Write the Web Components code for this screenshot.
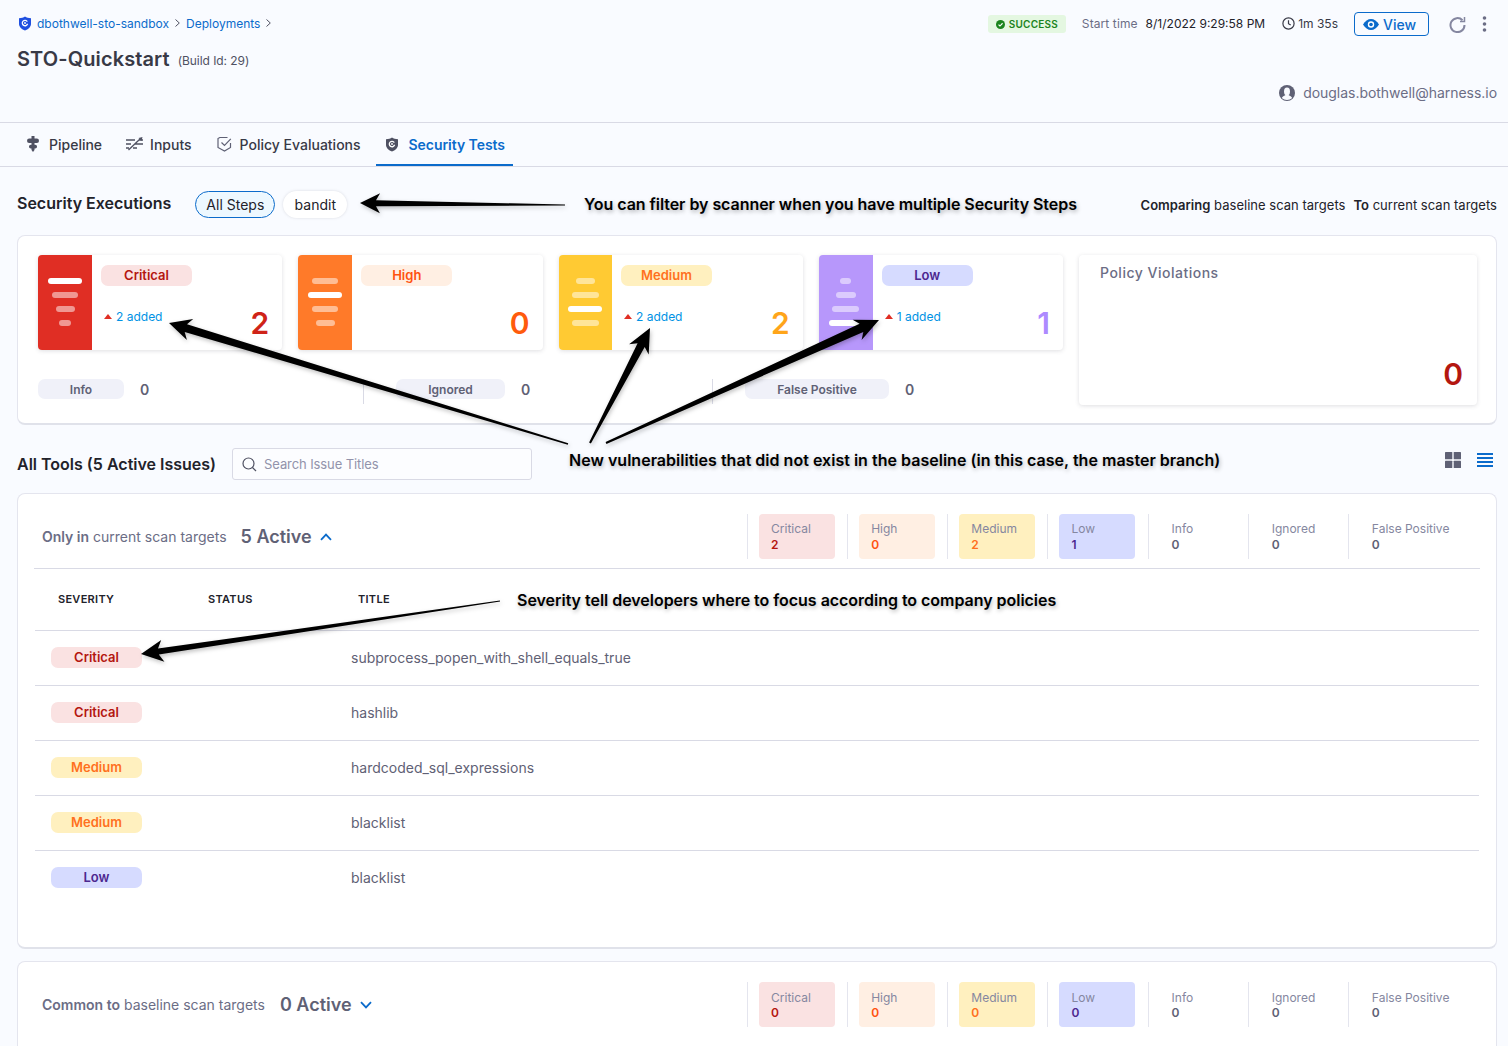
<!DOCTYPE html>
<html><head><meta charset="utf-8"><title>STO-Quickstart</title>
<style>
html,body{margin:0;padding:0;background:#f9fbff;}
body{font-family:Inter,"Liberation Sans",sans-serif;color:#22222a;width:1508px;height:1046px;overflow:hidden;position:relative;}
</style></head><body>
<run-page></run-page>
<script>
const shield=(fill)=>`<svg width="14" height="15" viewBox="0 0 14 15"><path d="M7 .5C8.500 1.500 10.500 2.200 13 2.300V8c0 3-2.800 5.300-6 6.500C3.800 13.300 1 11 1 8V2.300C3.500 2.200 5.500 1.500 7 .5Z" fill="${fill}"/><path d="M9.300 5.600A2.700 2.700 0 1 0 9.600 7.800" fill="none" stroke="#fff" stroke-width="1.300"/><circle cx="7" cy="7" r=".9" fill="#fff"/></svg>`;
const ICON={
logo:shield('#1f4fe0'),
pipeline:'<svg width="12" height="16" viewBox="0 0 12 16" fill="#4f5162"><rect x="4.500" width="3" height="4"/><rect y="2.500" width="12" height="4.500" rx="2.200"/><rect x="4.500" y="6" width="3" height="4"/><rect x="2" y="8.800" width="8" height="3.700" rx="1.800"/><path d="M4.500 12h3v2L6 16 4.500 14Z"/></svg>',
inputs:'<svg width="17" height="14" viewBox="0 0 17 14" fill="none" stroke="#4f5162" stroke-width="1.300"><path d="M0 3h9M13 3h4M0 7h5M9 7h8M0 11h3M7 11h4M2.500 13 14 2"/><path d="M12.500 1 16.500 0 15.500 4Z" fill="#4f5162" stroke="none"/></svg>',
policy:'<svg width="15" height="16" viewBox="0 0 15 16" fill="none" stroke="#5f6175" stroke-width="1.200"><path d="M10.500 1.500H2.800L1 2.500V11.500L7.500 15l6-3.500V7"/><path d="M4.500 6.500l3 3L13.800 2.800"/></svg>',
sec:shield('#4f5162'),
ok:'<svg width="9" height="9" viewBox="0 0 10 10"><circle cx="5" cy="5" r="5" fill="#1b841d"/><path d="M2.800 5.100 4.400 6.700 7.300 3.600" stroke="#fff" stroke-width="1.300" fill="none"/></svg>',
clock:'<svg width="13" height="13" viewBox="0 0 13 13" fill="none" stroke="#383946" stroke-width="1.200"><circle cx="6.500" cy="6.500" r="5.600"/><path d="M6.500 3.300v3.400l2.200 1.300"/></svg>',
eye:'<svg width="16" height="11" viewBox="0 0 16 11"><path d="M0 5.500C2 2 5 0 8 0s6 2 8 5.500C14 9 11 11 8 11S2 9 0 5.500Z" fill="#0b6bcb"/><circle cx="8" cy="5.500" r="3.200" fill="#fff"/><circle cx="8" cy="5.500" r="1.800" fill="#0b6bcb"/></svg>',
refresh:'<svg width="17" height="17" viewBox="0 0 17 17" fill="none" stroke="#8587a0" stroke-width="2"><path d="M13.500 4.200A7 7 0 1 0 15.500 9"/><path d="M15.500 1v4.500H11" stroke-width="1.500"/></svg>',
dots:'<svg width="5" height="16" viewBox="0 0 5 16" fill="#6b6d85"><circle cx="2.500" cy="2" r="1.800"/><circle cx="2.500" cy="8" r="1.800"/><circle cx="2.500" cy="14" r="1.800"/></svg>',
user:'<svg width="16" height="16" viewBox="0 0 16 16"><circle cx="8" cy="8" r="8" fill="#5f6175"/><ellipse cx="8" cy="6.500" rx="3" ry="4" fill="#f9fbff"/><path d="M2.800 13c1-1.800 3-2.500 3.700-3h3c.7.500 2.700 1.200 3.700 3-1.400 1.300-3.200 2-5.200 2s-3.800-.7-5.200-2Z" fill="#f9fbff"/></svg>',
search:'<svg width="15" height="15" viewBox="0 0 15 15" fill="none" stroke="#4f5162" stroke-width="1.200"><circle cx="6.500" cy="6.500" r="5.500"/><path d="M10.500 10.500 14 14"/></svg>',
up:'<svg width="12" height="8" viewBox="0 0 12 8" fill="none" stroke="#0b6bcb" stroke-width="1.800"><path d="M1 6.800 6 1.600l5 5.200"/></svg>',
down:'<svg width="12" height="8" viewBox="0 0 12 8" fill="none" stroke="#0b6bcb" stroke-width="1.800"><path d="M1 1.200 6 6.400l5-5.200"/></svg>',
grid:'<svg width="16" height="16" viewBox="0 0 16 16" fill="#5f6175"><rect width="7.300" height="7.300" rx=".6"/><rect x="8.700" width="7.300" height="7.300" rx=".6"/><rect y="8.700" width="7.300" height="7.300" rx=".6"/><rect x="8.700" y="8.700" width="7.300" height="7.300" rx=".6"/></svg>',
list:'<svg width="16" height="14" viewBox="0 0 16 14" fill="#0b6bcb"><rect width="16" height="2"/><rect y="4" width="16" height="2"/><rect y="8" width="16" height="2"/><rect y="12" width="16" height="2"/></svg>',
chev:'<svg width="5" height="8" viewBox="0 0 5 8" fill="none" stroke="#4f5162" stroke-width="1"><path d="M.5.500 4.300 4 .5 7.500"/></svg>'
};
const SEV={
 Critical:{bar:'#e02e24',bg:'#fae2e2',fg:'#b41710',num:'#cf2318',cell:'#fae2e2',val:'#b41710',w:[34,26,19,12],on:0,bw:54},
 High:{bar:'#ff7a29',bg:'#ffefe3',fg:'#ff5310',num:'#ff5b0d',cell:'#ffefe3',val:'#ff5310',w:[26,34,26,19],on:1,bw:54},
 Medium:{bar:'#ffca33',bg:'#fff0bf',fg:'#ff7020',num:'#ffa51a',cell:'#fff0bf',val:'#ff7020',w:[19,27,34,27],on:2,bw:53.5},
 Low:{bar:'#b797fb',bg:'#d6dbff',fg:'#4d278f',num:'#ad8aff',cell:'#d6dbff',val:'#4d278f',w:[11,20,27,34],on:3,bw:54}
};
function def(name,html){
 customElements.define(name,class extends HTMLElement{
  connectedCallback(){
   if(this.shadowRoot)return;
   const s=this.attachShadow({mode:'open'});
   s.innerHTML=typeof html==='function'?html(this):html;
  }
 });
}
def('run-header',()=>`<style>
:host{display:block;height:122px;border-bottom:1px solid #d9dae5;position:relative}
.top{display:flex;align-items:center;height:18px;padding:15px 0 0 17px;font-size:12px}
.crumb{display:flex;align-items:center;color:#0b6bcb;position:relative;top:-1px}
.crumb>svg:first-child{margin:0 5px 0 1px}
.sep{margin:0 6px;display:flex}
.right{margin-left:auto;display:flex;align-items:center;padding-right:20px}
.ok{display:flex;align-items:center;gap:4px;height:18px;width:78px;box-sizing:border-box;padding-left:8px;background:#e4f7e1;border-radius:3px;color:#1b841d;font-size:10px;font-weight:600;letter-spacing:.2px}
.st{color:#6b6d85;margin-left:16px;letter-spacing:.1px;position:relative;top:-1px}.dt{margin-left:8px;color:#22222a;position:relative;top:-1px}
.cl{display:flex;align-items:center;gap:3px;margin-left:17px;color:#383946;position:relative;top:-1px}
.view{display:flex;align-items:center;gap:4px;padding-left:8px;width:75px;height:24px;box-sizing:border-box;border:1px solid #0b6bcb;border-radius:4px;color:#0b6bcb;font-size:14px;font-weight:500;margin-left:16px}
.refresh{margin-left:20px;display:flex}.dots{margin-left:17px;display:flex;position:relative;left:-1px}
.title{display:flex;align-items:baseline;padding:14px 0 0 17px;height:39px;box-sizing:border-box;line-height:25px}
h1{margin:0;font-size:20px;font-weight:600;color:#383946;letter-spacing:.1px}
small{font-size:12px;color:#4f5162;margin-left:8px;position:relative;top:-1px;letter-spacing:-.05px}
.user{display:flex;justify-content:flex-end;align-items:center;gap:8px;padding:11px 11px 0 0;font-size:14px;color:#6b6d85;line-height:20px;letter-spacing:-.03px}
</style>
<div class="top"><div class="crumb">${ICON.logo}<span>dbothwell-sto-sandbox</span><span class="sep">${ICON.chev}</span><span>Deployments</span><span class="sep">${ICON.chev}</span></div>
<div class="right"><div class="ok">${ICON.ok}SUCCESS</div><span class="st">Start time</span><span class="dt">8/1/2022 9:29:58 PM</span><span class="cl">${ICON.clock}1m 35s</span><div class="view">${ICON.eye}View</div><span class="refresh">${ICON.refresh}</span><span class="dots">${ICON.dots}</span></div></div>
<div class="title"><h1>STO-Quickstart</h1><small>(Build Id: 29)</small></div>
<div class="user">${ICON.user}<span>douglas.bothwell@harness.io</span></div>`);
def('run-tabs',()=>`<style>
:host{display:flex;height:43px;border-bottom:1px solid #d9dae5;padding-left:19px;gap:8px;font-size:14px;color:#383946}
.t{display:flex;align-items:center;box-sizing:border-box;height:43px;padding:0 8px 1px;gap:8px;font-weight:500}
.t.a{color:#0b6bcb;font-weight:600;border-bottom:2px solid #0b6bcb;padding:1px 8px 0 9px;letter-spacing:-.05px}
</style>
<div class="t" style="gap:10px">${ICON.pipeline}Pipeline</div>
<div class="t" style="gap:7px">${ICON.inputs}Inputs</div>
<div class="t" style="margin-left:1px;padding-right:7px">${ICON.policy}Policy Evaluations</div>
<div class="t a" style="gap:10px">${ICON.sec}Security Tests</div>`);
def('sev-pill',h=>{const s=SEV[h.getAttribute('level')];return `<style>
:host{display:inline-flex;align-items:center;justify-content:center;width:91px;height:21px;border-radius:7px;background:${s.bg};color:${s.fg};font-size:13px;font-weight:600;}
</style>${h.getAttribute('level')}`});
def('sev-card',h=>{const l=h.getAttribute('level'),s=SEV[l],added=h.getAttribute('added');
 const bars=s.w.map((w,i)=>`<i style="width:${w}px;background:${i==s.on?'#fff':'rgba(255,255,255,.5)'}"></i>`).join('');
 return `<style>
:host{display:flex;height:95px;background:#fff;border-radius:4px;box-shadow:0 1px 4px rgba(96,97,112,.2);overflow:hidden}
.bar{width:${s.bw}px;background:${s.bar};display:flex;flex-direction:column;align-items:center;gap:8px;padding-top:23px;box-sizing:border-box;flex:none}
i{display:block;height:6px;border-radius:3px}
.m{flex:1;padding:9px 13px 0 9px;min-width:0}
.r{display:flex;justify-content:space-between;margin-top:18px;height:38px}
.a{font-size:12px;color:#0092e4;display:flex;align-items:center;gap:4px;height:14px;margin-top:6px;padding-left:3px}
.a b{width:0;height:0;border:4px solid transparent;border-top:0;border-bottom:5px solid #e02e24;display:block}
.n{font-size:30px;font-weight:600;line-height:38px;color:${s.num}}
</style><div class="bar">${bars}</div><div class="m"><sev-pill level="${l}"></sev-pill><div class="r"><div class="a">${added?`<b></b>${added} added`:''}</div><div class="n">${h.getAttribute('count')}</div></div></div>`});
def('plain-count',h=>`<style>
:host{display:flex;align-items:center;height:25px;align-self:start;box-sizing:border-box;padding-left:${h.getAttribute('pad')||0}px;${h.hasAttribute('rule')?'border-left:1px solid #d9dae5;':''}}
.c{display:flex;align-items:center;justify-content:center;height:20px;width:${h.getAttribute('w')}px;border-radius:7px;background:#f0f1f9;color:#5f6175;font-size:12px;font-weight:600;margin-top:-5px}
.v{margin-left:16px;color:#5f6175;font-size:14px;font-weight:600;margin-top:-5px}
</style><div class="c">${h.getAttribute('label')}</div><div class="v">${h.getAttribute('value')}</div>`);
def('policy-card',()=>`<style>
:host{display:flex;flex-direction:column;height:150px;box-sizing:border-box;background:#fff;border-radius:4px;box-shadow:0 1px 4px rgba(96,97,112,.2);padding:9px 14px 10px 21px}
.t{font-size:14px;font-weight:500;color:#6b6d85;letter-spacing:.5px;line-height:17px}
.n{margin-top:auto;text-align:right;font-size:30px;font-weight:600;color:#b41710;line-height:36px;margin-bottom:3px}
</style><div class="t">Policy Violations</div><div class="n">0</div>`);
def('count-strip',h=>{const v=h.getAttribute('values').split(',');const names=['Critical','High','Medium','Low','Info','Ignored','False Positive'];
 const nudge=h.hasAttribute('nudge')&&h.getAttribute('nudge')!=='0';
 const cells=names.map((n,i)=>{const s=SEV[n];return `<div class="o"><div class="c" style="${s?`background:${s.cell}`:''}"><span>${n}</span><b style="color:${s?s.val:'#5f6175'}">${v[i]}</b></div></div>`}).join('');
 return `<style>
:host{display:flex;height:45px;margin-right:32px}
.o{width:100.150px;box-sizing:border-box;border-left:1px solid #e4e5ee;padding-left:11px}
.c{width:76px;height:45px;box-sizing:border-box;padding:${nudge?8:7}px 0 0 12px;border-radius:4px;font-size:12px;color:#8587a0;display:flex;flex-direction:column;line-height:${nudge?15:16}px;white-space:nowrap}
.c b{font-weight:600}
</style>${cells}`});
def('issue-row',h=>`<style>
:host{display:flex;align-items:center;height:55px;box-sizing:border-box;border-top:1px solid #d9dae5;margin:0 1px;padding:0 0 2px 16px;font-size:14px;color:#5f6175}
.t{margin-left:209px}
</style><sev-pill level="${h.getAttribute('level')}"></sev-pill><span class="t">${h.getAttribute('title')}</span>`);
def('scan-panel',h=>`<style>
:host{display:block;background:#fff;border-radius:8px;margin:0 11px 0 17px;border:1px solid #e4e5ee;border-bottom:2px solid #e0e2ea;padding:20px 16px 0;box-sizing:border-box;height:${h.getAttribute('h')}px}
.head{display:flex;align-items:center;height:45px;padding-left:8px;font-size:14px;color:#6b6d85;justify-content:space-between}
.l{display:flex;align-items:center}
b{font-weight:600}
.a{font-size:18px;font-weight:600;color:#5f6175;margin-left:${h.getAttribute('gap')||15}px;margin-right:8px}
svg{display:block}
</style><div class="head"><div class="l"><span><b>${h.getAttribute('lead')}</b> ${h.getAttribute('rest')}</span><span class="a">${h.getAttribute('active')}</span>${ICON[h.getAttribute('chev')]}</div><count-strip nudge="${h.getAttribute('nudge')||0}" values="${h.getAttribute('values')}"></count-strip></div><slot></slot>`);
def('table-head',()=>`<style>
:host{display:flex;margin-top:9px;height:62px;box-sizing:border-box;border-top:1px solid #d9dae5;align-items:center;padding:0 0 1px 24px;font-size:11px;font-weight:600;letter-spacing:.28px;color:#22222a}
span{width:150px}
</style><span>SEVERITY</span><span>STATUS</span><span>TITLE</span>`);
def('note-text',h=>`<style>
:host{position:absolute;left:${h.getAttribute('x')}px;top:${h.getAttribute('y')}px;font-size:16px;font-weight:600;line-height:20px;color:#000;white-space:nowrap;text-shadow:1px 2px 4px rgba(0,0,0,.3);letter-spacing:${h.getAttribute('ls')||0}px}
</style><slot></slot>`);
def('note-arrows',()=>{
 const A=[[565,205,360,203,1,6,20,10],[568,444,169,323,1.5,8,22,11],[590,443,650,328,2,8,24,11],[606,443,879,320,2,9,24,11],[500,601,141,654,1,6,22,11]];
 const polys=A.map(([x0,y0,x1,y1,w0,w1,hl,hw])=>{
  const dx=x1-x0,dy=y1-y0,L=Math.hypot(dx,dy),ux=dx/L,uy=dy/L,nx=-uy,ny=ux;
  const P=(d,o)=>(x0+ux*d+nx*o).toFixed(1)+','+(y0+uy*d+ny*o).toFixed(1);
  const b=L-hl, n=L-hl*.8;
  return `<polygon points="${P(0,w0/2)} ${P(n,w1/2)} ${P(b,hw)} ${P(L,0)} ${P(b,-hw)} ${P(n,-w1/2)} ${P(0,-w0/2)}"/>`}).join('');
 return `<style>:host{position:absolute;left:0;top:0;width:1508px;height:1046px;pointer-events:none}svg{display:block;filter:drop-shadow(1px 2px 2px rgba(0,0,0,.25))}</style><svg width="1508" height="1046" fill="#000">${polys}</svg>`});
def('run-page',()=>`<style>
:host{display:block;position:relative;width:1508px;height:1046px}
.sec{display:flex;align-items:center;height:27px;margin-top:24px;padding:0 11px 0 17px}
h2{margin:0;font-size:16px;font-weight:600;color:#22222a}
.sec h2{margin-top:-4px}
.chip{display:flex;align-items:center;justify-content:center;height:27px;box-sizing:border-box;border-radius:14px;font-size:14px;color:#22222a}
.c1{width:80px;margin-left:24px;border:1px solid #0b6bcb;background:#edf8ff}
.c2{width:64px;margin-left:8px;background:#fff;box-shadow:0 0 3px rgba(96,97,112,.2)}
.cmp{margin-left:auto;font-size:13px;color:#22222a;display:flex;gap:8px;letter-spacing:.02px}.cmp b{font-weight:600}
.sum{display:grid;grid-template-columns:1025px 398px;column-gap:16px;margin:17px 11px 0 17px;padding:19px 20px 19px 20px;height:190px;box-sizing:border-box;background:#fff;border-radius:8px;border:1px solid #e4e5ee;border-bottom:2px solid #e0e2ea}
.left{display:flex;flex-direction:column}
.cards{display:grid;grid-template-columns:repeat(4,1fr);gap:16px}
.cnt{display:grid;grid-template-columns:325px 349px 1fr;margin-top:29px}
.tools{display:flex;align-items:center;height:32px;margin:23px 15px 0 17px}
.sb{display:flex;align-items:center;gap:7px;width:300px;height:32px;box-sizing:border-box;border:1px solid #d9dae5;border-radius:3px;margin-left:16px;padding-left:9px;font-size:13px;color:#9293ab;background:#fcfdff;letter-spacing:-.1px}
.ic{margin-left:auto;display:flex;gap:16px;align-items:center;margin-top:-8px}
svg{display:block}
scan-panel+scan-panel{margin-top:12px}
.list{margin-top:13px}
</style>
<run-header></run-header><run-tabs></run-tabs>
<div class="sec"><h2>Security Executions</h2><div class="chip c1">All Steps</div><div class="chip c2">bandit</div><div class="cmp"><span><b>Comparing</b> baseline scan targets</span><span><b>To</b> current scan targets</span></div></div>
<div class="sum"><div class="left"><div class="cards"><sev-card level="Critical" count="2" added="2"></sev-card><sev-card level="High" count="0"></sev-card><sev-card level="Medium" count="2" added="2"></sev-card><sev-card level="Low" count="1" added="1"></sev-card></div>
<div class="cnt"><plain-count label="Info" value="0" w="86"></plain-count><plain-count rule pad="32" label="Ignored" value="0" w="109"></plain-count><plain-count rule pad="32" label="False Positive" value="0" w="144"></plain-count></div></div>
<policy-card></policy-card></div>
<div class="tools"><h2>All Tools (5 Active Issues)</h2><div class="sb">${ICON.search}Search Issue Titles</div><div class="ic">${ICON.grid}${ICON.list}</div></div>
<div class="list">
<scan-panel h="456" gap="14" lead="Only in" rest="current scan targets" active="5 Active" chev="up" values="2,0,2,1,0,0,0">
<table-head></table-head>
<issue-row level="Critical" title="subprocess_popen_with_shell_equals_true"></issue-row>
<issue-row level="Critical" title="hashlib"></issue-row>
<issue-row level="Medium" title="hardcoded_sql_expressions"></issue-row>
<issue-row level="Medium" title="blacklist"></issue-row>
<issue-row level="Low" title="blacklist"></issue-row>
</scan-panel>
<scan-panel h="120" nudge="1" lead="Common to" rest="baseline scan targets" active="0 Active" chev="down" values="0,0,0,0,0,0,0"></scan-panel>
</div>
<note-arrows></note-arrows>
<note-text x="584" y="194" ls="-.05">You can filter by scanner when you have multiple Security Steps</note-text>
<note-text x="569" y="450" ls=".02">New vulnerabilities that did not exist in the baseline (in this case, the master branch)</note-text>
<note-text x="517" y="590" ls="-.03">Severity tell developers where to focus according to company policies</note-text>`);
</script>
</body></html>
